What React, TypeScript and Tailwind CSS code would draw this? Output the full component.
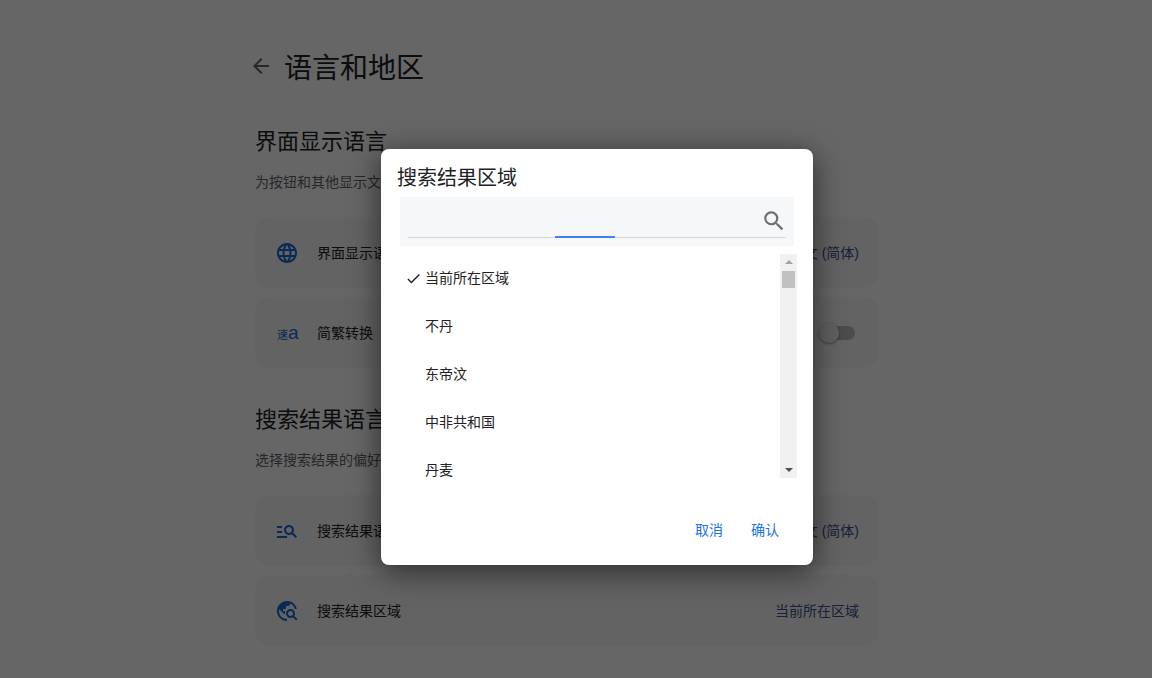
import { MdArrowBack, MdCheck, MdLanguage, MdManageSearch, MdSearch, MdTravelExplore } from "react-icons/md";
import type { ReactNode } from "react";

const regions = ["当前所在区域", "不丹", "东帝汶", "中非共和国", "丹麦"];

function Row({ icon, label, children, className }: { icon: ReactNode; label: string; children: ReactNode; className?: string }) {
  return (
    <div className={`flex h-[71px] items-center rounded-2xl bg-[#f7f7f8] pl-5 pr-5 ${className ?? ""}`}>
      <div className="flex w-[42px] shrink-0 items-center text-[#1a66d2]">{icon}</div>
      <span className="text-sm text-[#202124]">{label}</span>
      <div className="ml-auto text-sm text-[#3a4f90]">{children}</div>
    </div>
  );
}

function Section({ title, desc }: { title: string; desc: string }) {
  return (
    <div>
      <h2 className="text-[22px] leading-[32px] text-[#202124]">{title}</h2>
      <p className="mt-[14px] text-sm leading-5 text-[#5f6368]">{desc}</p>
    </div>
  );
}

function RegionDialog() {
  return (
    <div className="flex h-[416px] w-[432px] flex-col rounded-lg bg-white shadow-[0_6px_30px_rgba(0,0,0,0.6)]">
      <h3 className="ml-4 mt-[15px] text-xl leading-7 text-[#202124]">搜索结果区域</h3>
      <div className="mx-[19px] mt-[5px] h-[49px] bg-[#f6f7f9] px-2">
        <div className="relative flex h-[41px] items-center justify-end border-b border-[#d5d7da]">
          <MdSearch className="mr-[-1px] mt-[8px] text-[#6d6f73]" size={26} />
          <div className="absolute bottom-[-1px] left-[147px] h-[2px] w-[60px] bg-[#3f83f0]" />
        </div>
      </div>
      <div className="ml-[19px] mr-4 mt-2 flex h-[224px]">
        <ul className="flex-1">
          {regions.map((name, i) => (
            <li key={name} className="flex h-12 items-center pl-[5px] text-sm text-[#202124]">
              <span className="w-5 shrink-0">{i === 0 && <MdCheck size={17} />}</span>
              {name}
            </li>
          ))}
        </ul>
        <div className="flex w-[17px] flex-col items-center bg-[#f1f1f1]">
          <div className="mt-[6px] h-0 w-0 border-x-[4px] border-b-[4px] border-x-transparent border-b-[#a3a3a3]" />
          <div className="mt-[7px] h-[17px] w-[13px] bg-[#c1c1c1]" />
          <div className="mb-[6px] mt-auto h-0 w-0 border-x-[4px] border-t-[4px] border-x-transparent border-t-[#505050]" />
        </div>
      </div>
      <div className="mt-[42px] flex justify-end gap-7 pr-[34px] text-sm leading-5 text-[#1a73e8]">
        <button>取消</button>
        <button>确认</button>
      </div>
    </div>
  );
}

export default function App() {
  return (
    <div className="relative h-[678px] w-full overflow-hidden bg-white font-['Liberation_Sans','Noto_Sans_CJK_SC',sans-serif]">
      <main className="ml-[255px] w-[624px] pt-[49px]">
        <div className="flex h-10 items-center">
          <MdArrowBack className="ml-[-6px] mt-[-7px] text-[#5f6368]" size={24} />
          <h1 className="ml-[11px] text-[28px] leading-10 text-[#202124]">语言和地区</h1>
        </div>
        <div className="mt-[37px]">
          <Section title="界面显示语言" desc="为按钮和其他显示文" />
        </div>
        <div className="mt-[25px] flex flex-col gap-[9px]">
          <Row icon={<MdLanguage size={24} />} label="界面显示语言">中文 (简体)</Row>
          <Row
            icon={
              <span className="ml-[2px] flex items-baseline leading-none">
                <span className="text-[11px]">速</span>
                <span className="text-[19px] font-medium">a</span>
              </span>
            }
            label="简繁转换"
          >
            <div className="relative mr-[4px] h-[14px] w-9 rounded-full bg-[#bdbdbd]">
              <div className="absolute left-0 top-[-3px] h-5 w-5 rounded-full bg-[#f1f1f1] shadow-[0_1px_3px_rgba(0,0,0,0.4)]" />
            </div>
          </Row>
        </div>
        <div className="mt-[36px]">
          <Section title="搜索结果语言" desc="选择搜索结果的偏好语言" />
        </div>
        <div className="mt-[25px] flex flex-col gap-[9px]">
          <Row icon={<MdManageSearch size={24} />} label="搜索结果语言">中文 (简体)</Row>
          <Row icon={<MdTravelExplore size={24} />} label="搜索结果区域">当前所在区域</Row>
        </div>
      </main>
      <div className="absolute inset-0 flex items-start bg-black/60 pl-[381px] pt-[149px]">
        <RegionDialog />
      </div>
    </div>
  );
}
